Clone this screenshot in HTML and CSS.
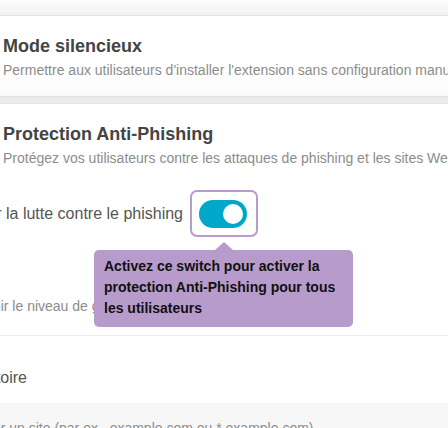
FILE: index.html
```html
<!DOCTYPE html>
<html lang="fr">
<head>
<meta charset="utf-8">
<title>Paramètres</title>
<link rel="stylesheet" href="styles.css">
</head>
<body>
  <div class="topbar"></div>
  <section class="card card-silent">
    <h2 class="title">Mode silencieux</h2>
    <p class="desc">Permettre aux utilisateurs d'installer l'extension sans configuration manuelle</p>
  </section>
  <div class="band"></div>
  <section class="card card-phish">
    <h2 class="title">Protection Anti-Phishing</h2>
    <p class="desc">Protégez vos utilisateurs contre les attaques de phishing et les sites Web malveillants</p>

    <div class="toggle-row">
      <div class="label-clip"><span class="label">Activer la lutte contre le phishing</span></div>
      <div class="focus-ring">
        <span class="switch"><span class="knob"></span></span>
      </div>
    </div>

    <div class="level-clip"><span class="level">Définir le niveau de gravité des alertes</span></div>
    <div class="divider"></div>

    <div class="sub-clip"><span class="sub">Liste blanche obligatoire</span></div>

    <div class="input-box"><span class="placeholder">Ajouter un site (par ex., example.com ou *.example.com)</span></div>

    <div class="tooltip">Activez ce switch pour activer la protection Anti-Phishing pour tous les utilisateurs</div>
  </section>
</body>
</html>
```

FILE: styles.css
```css
* { box-sizing: border-box; }
html, body { margin: 0; padding: 0; }
body {
  width: 448px;
  height: 428px;
  overflow: hidden;
  background: #ffffff;
  font-family: "Liberation Sans", Arial, sans-serif;
  color: #555;
}
.topbar {
  height: 16px;
  background: linear-gradient(#fdfdfd, #f1f1f1);
  border-bottom: 1px solid #e3e3e3;
}
.card {
  background: #fff;
  padding: 19px 0 17px 0;
}
.card-silent {
  height: 80px;
  background: linear-gradient(#ffffff 70%, #fafafa);
}
.band {
  height: 8px;
  background: #ebebeb;
  border-top: 1px solid #e2e2e2;
  border-bottom: 1px solid #e6e6e6;
}
.card-phish {
  position: relative;
  padding-bottom: 0;
}
.title {
  margin: 0;
  padding-left: 3px;
  font-size: 18px;
  line-height: 22px;
  font-weight: bold;
  color: #444;
  white-space: nowrap;
}
.desc {
  margin: 4px 0 0 0;
  padding-left: 3px;
  font-size: 14px;
  line-height: 18px;
  color: #8c8c8c;
  white-space: nowrap;
}
.toggle-row {
  display: flex;
  align-items: center;
  gap: 7px;
  margin-top: 23px;
}
.label-clip {
  width: 183px;
  display: flex;
  justify-content: flex-end;
  overflow: hidden;
  white-space: nowrap;
}
.label {
  flex: none;
  font-size: 16px;
  line-height: 18px;
  color: #555;
}
.focus-ring {
  width: 68px;
  height: 47px;
  border: 2px solid #b79bcb;
  border-radius: 7px;
  display: flex;
  align-items: center;
  justify-content: center;
  padding-right: 2px;
}
.switch {
  width: 48px;
  height: 28px;
  border-radius: 14px;
  background: #00a7c9;
  display: flex;
  align-items: center;
  justify-content: flex-end;
  padding-right: 4px;
}
.knob {
  width: 20px;
  height: 20px;
  border-radius: 50%;
  background: #fff;
}
.level-clip {
  margin-top: 60px;
  overflow: hidden;
  white-space: nowrap;
}
.level {
  display: inline-block;
  margin-left: -32px;
  font-size: 14px;
  line-height: 18px;
  color: #8c8c8c;
}
.divider {
  margin-top: 20px;
  height: 1px;
  background: #eeeeee;
}
.sub-clip {
  margin-top: 33px;
  width: 27px;
  display: flex;
  justify-content: flex-end;
  overflow: hidden;
  white-space: nowrap;
}
.sub {
  flex: none;
  font-size: 16px;
  line-height: 18px;
  color: #555;
}
.input-box {
  margin-top: 16px;
  height: 40px;
  background: #f7f7f7;
  padding-top: 16px;
  overflow: hidden;
  white-space: nowrap;
}
.placeholder {
  display: inline-block;
  margin-left: -39px;
  font-size: 14px;
  line-height: 18px;
  color: #8c8c8c;
}
.tooltip {
  position: absolute;
  left: 94px;
  top: 146px;
  width: 259px;
  padding: 6px 10px 8px 10px;
  background: #b79bcb;
  border-radius: 5px;
  color: #111;
  font-size: 14px;
  line-height: 21px;
  font-weight: bold;
}
.tooltip::before {
  content: "";
  position: absolute;
  left: 121px;
  top: -8px;
  border-left: 9px solid transparent;
  border-right: 9px solid transparent;
  border-bottom: 8px solid #b79bcb;
}
```
